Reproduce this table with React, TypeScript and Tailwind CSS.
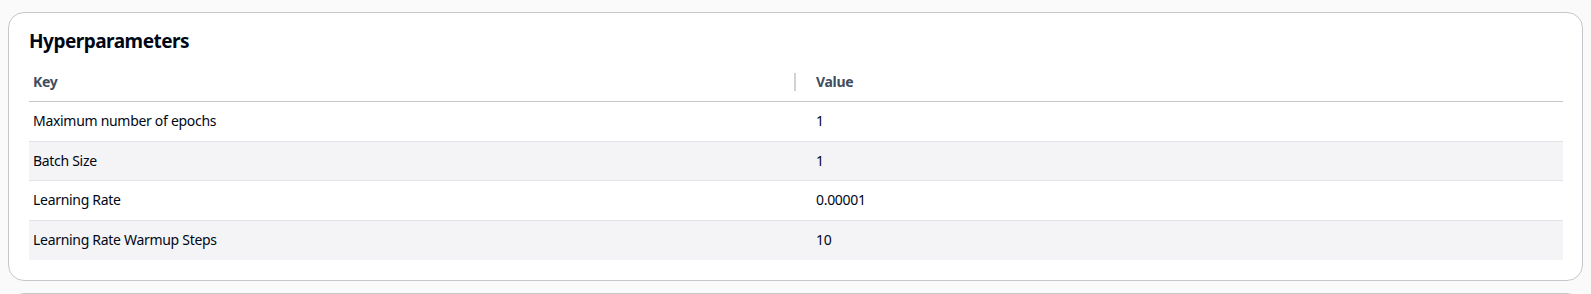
const rows = [
  { key: "Maximum number of epochs", value: "1" },
  { key: "Batch Size", value: "1" },
  { key: "Learning Rate", value: "0.00001" },
  { key: "Learning Rate Warmup Steps", value: "10" },
];

function HyperparameterTable() {
  return (
    <div className="text-sm tracking-[-0.3px] text-[#000716]">
      <div className="grid grid-cols-[783px_1fr] h-[40px] border-b border-[#c6c6cd] items-center font-bold text-[#414d5c]">
        <div className="flex items-center justify-between pl-1 pr-4">
          <span>Key</span>
          <span className="h-[18px] w-[2px] bg-[#d1d1d6]" />
        </div>
        <div className="pl-1">Value</div>
      </div>
      {rows.map((row, i) => (
        <div
          key={row.key}
          className={
            i % 2 === 1
              ? "grid grid-cols-[783px_1fr] h-[39.5px] items-center bg-[#f4f4f6]"
              : "grid grid-cols-[783px_1fr] h-[39.5px] items-center bg-white"
          }
          style={{ borderBottom: i < rows.length - 1 ? "1px solid #e2e2e6" : "none" }}
        >
          <div className="pl-1">{row.key}</div>
          <div className="pl-1">{row.value}</div>
        </div>
      ))}
    </div>
  );
}

export default function App() {
  return (
    <div
      className="min-h-[294px] bg-[#fafafa] pt-3 pl-2 pr-2 overflow-hidden"
      style={{ fontFamily: '"Noto Sans", "Open Sans", sans-serif' }}
    >
      <div className="bg-white border border-[#c6c6cd] rounded-2xl pl-5 pr-[19px] pt-4 pb-5">
        <h2 className="text-[19px] leading-6 tracking-[-0.5px] font-bold text-[#000716]">
          Hyperparameters
        </h2>
        <div className="mt-[9px]">
          <HyperparameterTable />
        </div>
      </div>
      <div className="mt-3 h-10 bg-white border border-[#c6c6cd] rounded-2xl" />
    </div>
  );
}
